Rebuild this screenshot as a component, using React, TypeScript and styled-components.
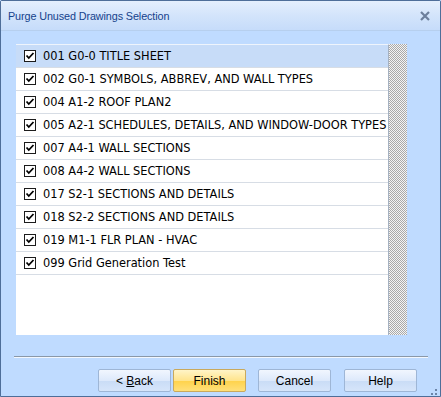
import React from "react"
import styled, { createGlobalStyle } from "styled-components"

const Global = createGlobalStyle`
html,body{margin:0;padding:0;background:#bfdbff;}
*{box-sizing:border-box;}
`
const Window = styled.div`
width:441px;
height:397px;
border:1px solid #4e6e99;
border-radius:2px 2px 0 0;
background:#bfdbff;
display:flex;
flex-direction:column;
position:relative;
font-family:"DejaVu Sans",Verdana,sans-serif;
`
const TitleBar = styled.div`
height:30px;
display:flex;
align-items:center;
justify-content:space-between;
padding:1px 9px 0 7px;
background:linear-gradient(#e4effd,#d3e4fb 50%,#c6dcfa);
border-bottom:1px solid #b6cfee;
`
const Title = styled.span`
font-family:"Liberation Sans",Arial,sans-serif;
font-size:10.8px;
letter-spacing:-0.1px;
color:#15428b;
`
const Close = styled.span`
width:12px;
height:12px;
display:flex;
`
const Body = styled.div`
flex:1;
display:flex;
flex-direction:column;
padding:13px 13px 0 15px;
`
const ListWrap = styled.div`
display:flex;
height:291px;
width:391px;
`
const List = styled.div`
flex:1;
background:#fff;
border-top:1px solid #eef4fc;
border-right:1px solid #a6b2c2;
`
const Row = styled.div<{ $sel?: boolean }>`
height:23px;
display:flex;
align-items:center;
padding-left:8px;
gap:7px;
border-bottom:1px solid #d7dde5;
background:${p => (p.$sel ? "#c7dcf8" : "#fff")};
font-size:11.4px;
color:#000;
white-space:nowrap;
`
const Hatch = styled.div`
width:18px;
background:repeating-conic-gradient(#a9a9a9 0 25%,#f4f4f4 0 50%) 0 0/2px 2px;
`
const Sep = styled.div`
margin:21px 0 0 -2px;
width:414px;
height:2px;
border-top:1px solid #8a98a8;
border-bottom:1px solid #f2f7fe;
`
const Buttons = styled.div`
display:flex;
margin:11px 0 0 82px;
`
const Btn = styled.button<{ $gold?: boolean; $gap?: number }>`
width:73px;
height:23px;
margin-left:${p => p.$gap ?? 0}px;
border:1px solid ${p => (p.$gold ? "#c9a95c" : "#9eb6d6")};
border-radius:2px;
background:${p =>
  p.$gold
    ? "linear-gradient(#fff4c8,#ffe48c 50%,#ffd24a 51%,#ffe07a)"
    : "linear-gradient(#f1f6fe,#dde9fb 50%,#c9dcf6 51%,#d6e5fa)"};
font-family:"Liberation Sans",Arial,sans-serif;
font-size:12px;
color:#000;
padding:0;
display:flex;
align-items:center;
justify-content:center;
white-space:pre;
u{text-decoration:underline;}
`
const Grip = styled.div`
position:absolute;
right:3px;
bottom:2px;
width:10px;
height:10px;
`

const items = [
  "001 G0-0 TITLE SHEET",
  "002 G0-1 SYMBOLS, ABBREV, AND WALL TYPES",
  "004 A1-2 ROOF PLAN2",
  "005 A2-1 SCHEDULES, DETAILS, AND WINDOW-DOOR TYPES",
  "007 A4-1 WALL SECTIONS",
  "008 A4-2 WALL SECTIONS",
  "017 S2-1 SECTIONS AND DETAILS",
  "018 S2-2 SECTIONS AND DETAILS",
  "019 M1-1 FLR PLAN - HVAC",
  "099 Grid Generation Test",
]

const Check = () => (
  <svg width="12" height="12" viewBox="0 0 12 12">
    <rect x="0.5" y="0.5" width="11" height="11" fill="#fff" stroke="#1c1c1c" />
    <path d="M2.5 5.5 L4.8 8 L9.5 3" fill="none" stroke="#000" strokeWidth="1.8" />
  </svg>
)

export default function App() {
  return (
    <>
      <Global />
      <Window>
        <TitleBar>
          <Title>Purge Unused Drawings Selection</Title>
          <Close>
            <svg width="12" height="12" viewBox="0 0 12 12">
              <path d="M2 2 L10 10 M10 2 L2 10" stroke="#6d7f9b" strokeWidth="2.2" />
            </svg>
          </Close>
        </TitleBar>
        <Body>
          <ListWrap>
            <List>
              {items.map((t, i) => (
                <Row key={i} $sel={i === 0}>
                  <Check />
                  <span>{t}</span>
                </Row>
              ))}
            </List>
            <Hatch />
          </ListWrap>
          <Sep />
          <Buttons>
            <Btn>{"< "}<u>B</u>ack</Btn>
            <Btn $gold $gap={2}>Finish</Btn>
            <Btn $gap={12}>Cancel</Btn>
            <Btn $gap={13}>Help</Btn>
          </Buttons>
        </Body>
        <Grip>
          <svg width="10" height="10" viewBox="0 0 10 10" fill="#6b84a8">
            <rect x="8" y="0" width="2" height="2" />
            <rect x="4" y="4" width="2" height="2" />
            <rect x="8" y="4" width="2" height="2" />
            <rect x="0" y="8" width="2" height="2" />
            <rect x="4" y="8" width="2" height="2" />
            <rect x="8" y="8" width="2" height="2" />
          </svg>
        </Grip>
      </Window>
    </>
  )
}
